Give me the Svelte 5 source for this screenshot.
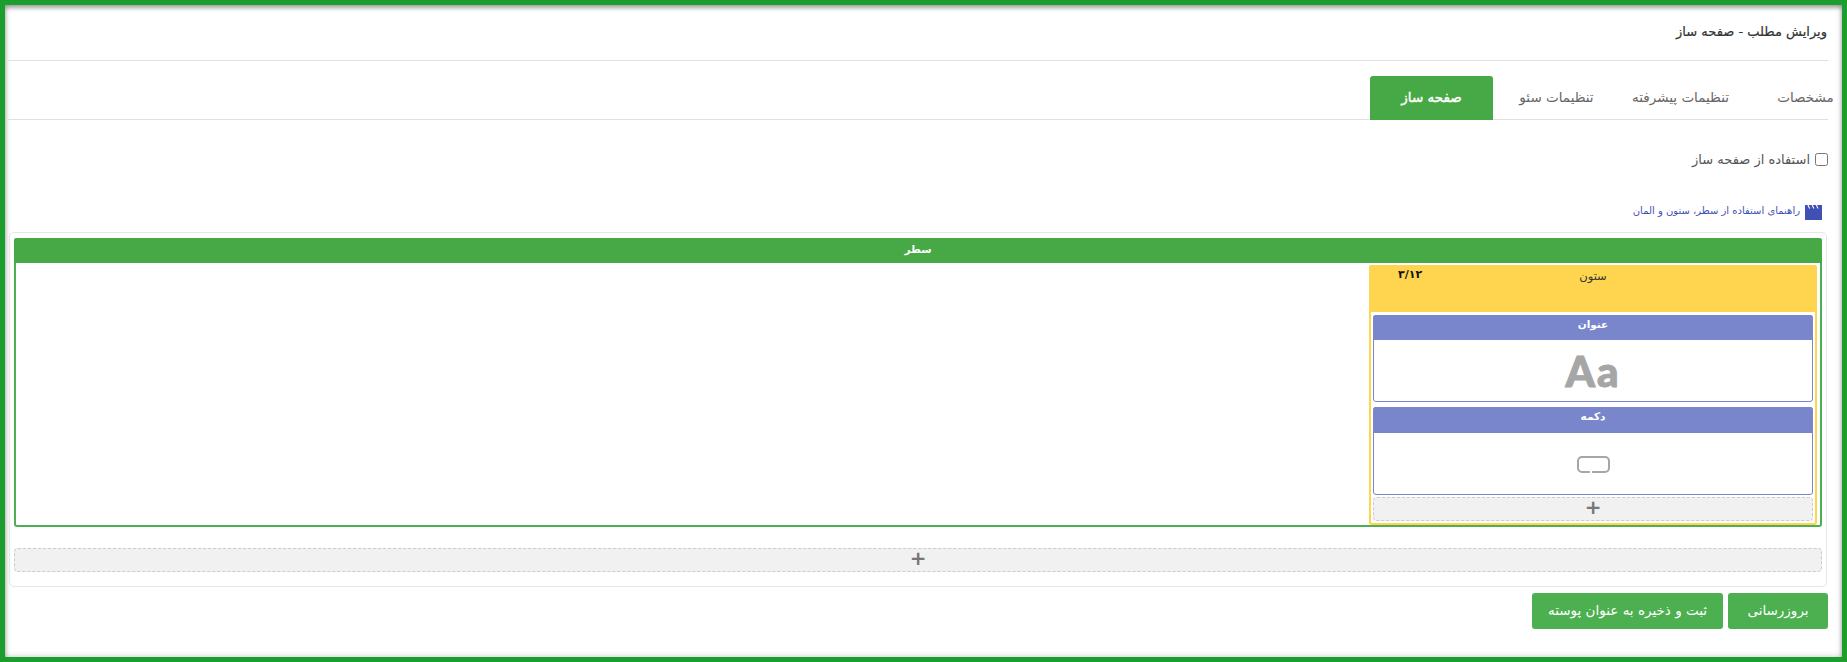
<script>
  const tabs = ["مشخصات", "تنظیمات پیشرفته", "تنظیمات سئو", "صفحه ساز"];
  const active = "صفحه ساز";
</script>

<div class="frame" dir="rtl">
  <div class="title">ویرایش مطلب - صفحه ساز</div>

  <ul class="tabs">
    {#each tabs as tab}
      <li class:active={tab === active}>{tab}</li>
    {/each}
  </ul>

  <label class="use-builder">
    <input type="checkbox" />
    <span>استفاده از صفحه ساز</span>
  </label>

  <a class="guide" href="#guide">
    <svg width="17" height="15" viewBox="0 0 17 15">
      <path fill="#3f51b5" d="M0 0h2.4l1.6 3.6h1.2L3.6 0h3l1.6 3.6h1.2L7.8 0h3l1.6 3.6h1.2L12 0h5v15H0z" />
    </svg>
    <span>راهنمای استفاده از سطر، ستون و المان</span>
  </a>

  <div class="canvas">
    <div class="row">
      <div class="row-head">سطر</div>
      <div class="row-body">
        <div class="col">
          <div class="col-head">
            <span></span>
            <span class="col-name">ستون</span>
            <b class="col-size">۳/۱۲</b>
          </div>
          <div class="col-body">
            <div class="element">
              <div class="el-head">عنوان</div>
              <div class="el-body"><span class="aa" dir="ltr">Aa</span></div>
            </div>
            <div class="element second">
              <div class="el-head">دکمه</div>
              <div class="el-body">
                <svg width="33" height="17" viewBox="0 0 33 17" fill="none" stroke="#a6a6a6" stroke-width="2">
                  <path d="M13 16H5a4 4 0 0 1-4-4V5a4 4 0 0 1 4-4h23a4 4 0 0 1 4 4v7a4 4 0 0 1-4 4H15" />
                </svg>
              </div>
            </div>
            <div class="add small">+</div>
          </div>
        </div>
      </div>
    </div>
    <div class="add wide">+</div>
  </div>

  <div class="actions">
    <button>بروزرسانی</button>
    <button>ثبت و ذخیره به عنوان پوسته</button>
  </div>
</div>

<style>
  :global(body) {
    margin: 0;
    font-family: "DejaVu Sans", "Noto Sans", sans-serif;
  }

  .frame {
    box-sizing: border-box;
    height: 662px;
    border: 5px solid #1c9e2e;
    background: #fff;
    box-shadow: inset 0 0 6px rgba(0, 0, 0, 0.22), inset 0 3px 4px rgba(0, 0, 0, 0.3);
    overflow: hidden;
    font-size: 12.5px;
    color: #555;
  }

  .title {
    height: 56px;
    box-sizing: border-box;
    margin: 0 14px 0 3px;
    padding: 16px 1px 0 0;
    line-height: 22px;
    font-size: 13px;
    color: #333;
    border-bottom: 1px solid #e0e0e0;
    -webkit-text-stroke: 0.2px #333;
  }

  .tabs {
    display: flex;
    height: 59px;
    box-sizing: border-box;
    margin: 0 14px 0 3px;
    padding: 15px 0 0;
    list-style: none;
    border-bottom: 1px solid #e0e0e0;
  }

  .tabs li {
    flex: 0 0 124px;
    box-sizing: border-box;
    height: 44px;
    padding: 0 0 0 3px;
    line-height: 42px;
    text-align: center;
    color: #666;
    font-size: 13.5px;
  }

  .tabs li:first-child {
    margin-right: -37px;
    padding-left: 5px;
  }

  .tabs li.active {
    flex-basis: 123px;
    padding: 0;
    background: #47a945;
    color: #fff;
    -webkit-text-stroke: 0.4px #fff;
    border-radius: 3px 3px 0 0;
  }

  .use-builder {
    display: flex;
    align-items: center;
    gap: 5px;
    margin: 30px 14px 0 0;
    height: 18px;
    font-size: 13px;
  }

  .use-builder input {
    margin: 0;
    width: 13px;
    height: 13px;
  }

  .guide {
    display: flex;
    align-items: center;
    gap: 5px;
    margin: 36px 20px 0 0;
    height: 16px;
    font-size: 10px;
    color: #3f51b5;
    text-decoration: none;
  }

  .guide span {
    padding-bottom: 4px;
  }

  .canvas {
    box-sizing: border-box;
    height: 355px;
    margin: 12px 15px 0 4px;
    padding: 5px 4px 0;
    border: 1px solid #e6e6e6;
    border-radius: 5px;
  }

  .row {
    box-sizing: border-box;
    height: 289px;
    border: 2px solid #4caf50;
    border-top: 0;
    border-radius: 3px;
  }

  .row-head {
    height: 25px;
    margin: 0 -2px;
    line-height: 22px;
    text-align: center;
    background: #47a945;
    color: #fff;
    font-size: 10.5px;
    font-weight: 700;
    border-radius: 3px 3px 0 0;
  }

  .row-body {
    padding: 2px 3px 0 0;
  }

  .col {
    box-sizing: border-box;
    width: 448px;
    height: 260px;
    border: 2px solid #ffd54f;
    border-top: 0;
    border-radius: 3px;
  }

  .col-head {
    display: grid;
    grid-template-columns: 1fr auto 1fr;
    height: 47px;
    margin: 0 -2px;
    padding: 1px 0 0;
    box-sizing: border-box;
    background: #ffd54f;
    border-radius: 3px 3px 0 0;
    font-size: 11.5px;
    line-height: 18px;
    color: #333;
  }

  .col-name {
    padding-top: 1px;
  }

  .col-size {
    padding-left: 29px;
    text-align: left;
    font-size: 11px;
    color: #111;
  }

  .col-body {
    padding: 3px 2px 0;
  }

  .element {
    box-sizing: border-box;
    height: 87px;
    border: 1px solid #7986cb;
    border-radius: 3px;
  }

  .element.second {
    height: 88px;
    margin-top: 5px;
  }

  .el-head {
    height: 24px;
    margin: -1px -1px 0;
    padding-bottom: 1px;
    line-height: 18px;
    text-align: center;
    background: #7986cb;
    color: #fff;
    font-size: 10.5px;
    font-weight: 700;
    border-radius: 3px 3px 0 0;
  }

  .second .el-head {
    height: 25px;
  }

  .el-body {
    display: flex;
    align-items: center;
    justify-content: center;
    height: 62px;
  }

  .aa {
    font-family: Lato, sans-serif;
    font-size: 42px;
    font-weight: 900;
    letter-spacing: 2px;
    color: #a6a6a6;
    line-height: 1;
    -webkit-text-stroke: 1px #a6a6a6;
  }

  .add {
    box-sizing: border-box;
    display: flex;
    align-items: center;
    justify-content: center;
    padding-bottom: 4px;
    background: #f1f1f1;
    border: 1px dashed #ccc;
    border-radius: 4px;
    color: #777;
    font-size: 20px;
    font-weight: 700;
  }

  .add.small {
    height: 24px;
    margin-top: 2px;
  }

  .add.wide {
    height: 24px;
    margin-top: 21px;
  }

  .actions {
    display: flex;
    gap: 5px;
    margin: 6px 14px 0 0;
  }

  .actions button {
    height: 36px;
    padding: 0 10px 3px;
    border: 0;
    border-radius: 3px;
    background: #4caf50;
    color: #fff;
    font-family: inherit;
    font-size: 13.5px;
  }

  .actions button:first-child {
    width: 100px;
  }

  .actions button:last-child {
    width: 191px;
  }
</style>
